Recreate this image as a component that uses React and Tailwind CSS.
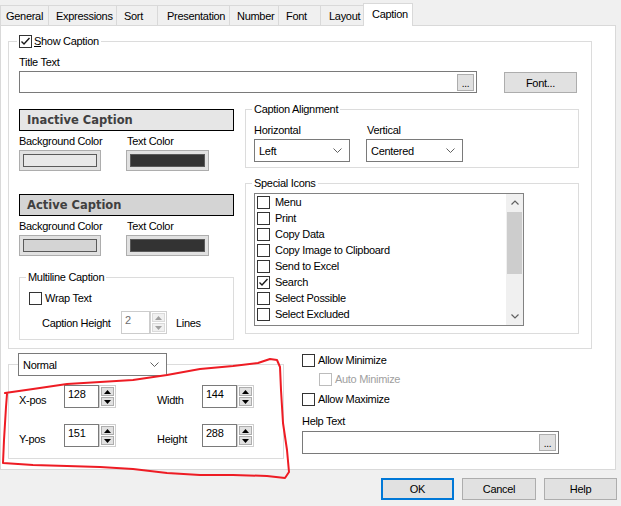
import React from "react";

const tabs = [
  { label: "General", cls: "w-[48px] pl-[5px]" },
  { label: "Expressions", cls: "w-[68px] pl-[7px]" },
  { label: "Sort", cls: "w-[41px] pl-[7px]" },
  { label: "Presentation", cls: "w-[72px] pl-[9px]" },
  { label: "Number", cls: "w-[49px] pl-[7px]" },
  { label: "Font", cls: "w-[42px] pl-[7px]" },
  { label: "Layout", cls: "w-[43px] pl-[8px]" },
];

const iconItems = [
  "Menu",
  "Print",
  "Copy Data",
  "Copy Image to Clipboard",
  "Send to Excel",
  "Search",
  "Select Possible",
  "Select Excluded",
];

const Check = ({ checked = false, disabled = false }) => (
  <span
    className={
      disabled
        ? "flex h-[13px] w-[13px] shrink-0 items-center justify-center border border-[#bcbcbc] bg-white"
        : "flex h-[13px] w-[13px] shrink-0 items-center justify-center border border-[#333333] bg-white"
    }
  >
    {checked && (
      <svg width="11" height="11" viewBox="0 0 11 11">
        <path d="M1.5 5.5 L4 8 L9.5 2" fill="none" stroke="#1a1a1a" strokeWidth="1.4" />
      </svg>
    )}
  </span>
);

const Chevron = () => (
  <svg width="9" height="5" viewBox="0 0 9 5">
    <path d="M0.5 0.5 L4.5 4.5 L8.5 0.5" fill="none" stroke="#606060" strokeWidth="1" />
  </svg>
);

const Dropdown = ({ value, className }) => (
  <div
    className={`flex h-[23px] items-center justify-between border border-[#7a7a7a] bg-white pl-[4px] pr-[7px] ${className}`}
  >
    <span>{value}</span>
    <Chevron />
  </div>
);

const Arrow = ({ down, color = "#000" }) => (
  <svg width="7" height="4" viewBox="0 0 7 4">
    <path d={down ? "M0 0 L3.5 4 L7 0 Z" : "M0 4 L3.5 0 L7 4 Z"} fill={color} />
  </svg>
);

const Spin = ({ value, disabled = false, className = "w-[52px]" }) => (
  <div className={`flex h-[23px] ${className}`}>
    <div
      className={
        disabled
          ? "flex-1 border border-[#cccccc] pl-[3px] pt-[1px] text-[#6d6d6d]"
          : "flex-1 border border-[#7a7a7a] pl-[3px] pt-[1px]"
      }
    >
      {value}
    </div>
    <div className="flex w-[17px] flex-col gap-[1px] border border-[#cfcfcf] bg-white p-[1px]">
      <div
        className={
          disabled
            ? "flex flex-1 items-center justify-center border border-[#dadada] bg-[#f0f0f0]"
            : "flex flex-1 items-center justify-center border border-[#adadad] bg-[#e1e1e1]"
        }
      >
        <Arrow color={disabled ? "#a0a0a0" : "#000"} />
      </div>
      <div
        className={
          disabled
            ? "flex flex-1 items-center justify-center border border-[#dadada] bg-[#f0f0f0]"
            : "flex flex-1 items-center justify-center border border-[#adadad] bg-[#e1e1e1]"
        }
      >
        <Arrow down color={disabled ? "#a0a0a0" : "#000"} />
      </div>
    </div>
  </div>
);

const Dots = () => (
  <div className="flex h-[17px] w-[17px] items-end justify-center border border-[#adadad] bg-[#e1e1e1] text-[10px] leading-[12px]">
    ...
  </div>
);

const Swatch = ({ className, inner }) => (
  <div className={`h-[21px] border border-[#adadad] bg-[#e1e1e1] p-[3px] ${className}`}>
    <div className={`h-full border border-[#5a5a5a] ${inner}`} />
  </div>
);

const CaptionBar = ({ label, className }) => (
  <div
    className={`flex h-[22px] items-center border border-black pl-[7px] font-['DejaVu_Sans',sans-serif] text-[11.5px] font-bold tracking-normal text-[#404040] ${className}`}
  >
    {label}
  </div>
);

const ScrollArrow = ({ down }) => (
  <div className="flex h-[17px] items-center justify-center">
    <svg width="8" height="5" viewBox="0 0 8 5">
      <path
        d={down ? "M0.5 0.5 L4 4 L7.5 0.5" : "M0.5 4.5 L4 1 L7.5 4.5"}
        fill="none"
        stroke="#606060"
        strokeWidth="1.2"
      />
    </svg>
  </div>
);

export default function App() {
  return (
    <div className="relative h-[506px] w-[621px] overflow-hidden whitespace-nowrap bg-[#f0f0f0] font-['Liberation_Sans',sans-serif] text-[11px] leading-[14px] tracking-[-0.3px] text-black">
      {/* tabs */}
      <div className="flex h-[25px] items-end">
        {tabs.map((t) => (
          <div
            key={t.label}
            className={`flex h-[20px] items-center border-l border-t border-[#d9d9d9] ${t.cls}`}
          >
            {t.label}
          </div>
        ))}
        <div className="relative z-10 -mb-px flex h-[23px] w-[50px] items-center border-x border-t border-[#d9d9d9] bg-white pb-[2px] pl-[8px]">
          Caption
        </div>
      </div>

      {/* tab page */}
      <div className="h-[445px] w-[616px] border border-[#d9d9d9] bg-white pl-[7px] pt-[8px]">
        <fieldset className="h-[315px] w-[584px] border border-[#dcdcdc] pl-[8px]">
          <legend className="flex h-[14px] items-center px-[2px]">
            <Check checked />
            <span className="ml-[2px]">
              <span className="underline">S</span>how Caption
            </span>
          </legend>
          <div className="pl-[2px]">
            <div className="mt-[7px]">Title Text</div>
            <div className="mt-[2px] flex items-start">
              <div className="flex h-[22px] w-[458px] items-center justify-end border border-[#7a7a7a] pr-[2px]">
                <Dots />
              </div>
              <div className="ml-[27px] mt-[1px] flex h-[21px] w-[73px] items-center justify-center border border-[#adadad] bg-[#e1e1e1]">
                Font...
              </div>
            </div>

            <div className="mt-[9px] flex">
              {/* left column */}
              <div className="w-[215px] pt-[7px]">
                <CaptionBar label="Inactive Caption" className="bg-[#e6e6e6]" />
                <div className="mt-[3px] flex">
                  <span className="w-[108px]">Background Color</span>
                  <span>Text Color</span>
                </div>
                <div className="mt-[2px] flex">
                  <Swatch className="w-[82px]" inner="bg-[#e8e8e8]" />
                  <Swatch className="ml-[25px] w-[83px]" inner="bg-[#333333]" />
                </div>

                <CaptionBar label="Active Caption" className="mt-[23px] bg-[#d4d4d4]" />
                <div className="mt-[3px] flex">
                  <span className="w-[108px]">Background Color</span>
                  <span>Text Color</span>
                </div>
                <div className="mt-[2px] flex">
                  <Swatch className="w-[82px]" inner="bg-[#d4d4d4]" />
                  <Swatch className="ml-[25px] w-[83px]" inner="bg-[#333333]" />
                </div>

                <fieldset className="mt-[14px] h-[70px] border border-[#dcdcdc] pl-[6px]">
                  <legend className="px-[2px]">Multiline Caption</legend>
                  <div className="ml-[3px] mt-[7px] flex h-[14px] items-center">
                    <Check />
                    <span className="ml-[3px]">Wrap Text</span>
                  </div>
                  <div className="ml-[16px] mt-[6px] flex items-center">
                    <span className="w-[79px]">Caption Height</span>
                    <Spin value="2" disabled className="w-[46px]" />
                    <span className="ml-[9px]">Lines</span>
                  </div>
                </fieldset>
              </div>

              {/* right column */}
              <div className="ml-[11px] w-[334px]">
                <fieldset className="h-[66px] border border-[#dcdcdc] pl-[6px]">
                  <legend className="px-[2px]">Caption Alignment</legend>
                  <div className="mt-[7px] flex pl-[2px]">
                    <span className="w-[113px]">Horizontal</span>
                    <span>Vertical</span>
                  </div>
                  <div className="mt-[2px] flex pl-[2px]">
                    <Dropdown value="Left" className="w-[96px]" />
                    <Dropdown value="Centered" className="ml-[16px] w-[97px]" />
                  </div>
                </fieldset>

                <fieldset className="mt-[8px] h-[158px] border border-[#dcdcdc] pl-[6px]">
                  <legend className="px-[2px]">Special Icons</legend>
                  <div className="ml-[2px] mt-[3px] flex h-[133px] w-[270px] border border-[#828282]">
                    <div className="flex-1 pl-[2px]">
                      {iconItems.map((item) => (
                        <div key={item} className="flex h-[16px] items-center">
                          <Check checked={item === "Search"} />
                          <span className="ml-[5px]">{item}</span>
                        </div>
                      ))}
                    </div>
                    <div className="flex w-[17px] flex-col bg-[#f0f0f0]">
                      <ScrollArrow />
                      <div className="mx-[1px] mt-[1px] h-[62px] bg-[#cdcdcd]" />
                      <div className="flex-1" />
                      <ScrollArrow down />
                    </div>
                  </div>
                </fieldset>
              </div>
            </div>
          </div>
        </fieldset>

        {/* position / size */}
        <div className="mt-[4px] flex">
          <fieldset className="h-[106px] w-[276px] border border-[#dcdcdc] pl-[9px]">
            <legend>
              <Dropdown value="Normal" className="w-[149px]" />
            </legend>
            <div className="mt-[9px] flex items-start">
              <span className="ml-[1px] mt-[8px] w-[45px]">X-pos</span>
              <Spin value="128" />
              <span className="ml-[41px] mt-[8px] w-[45px]">Width</span>
              <Spin value="144" />
            </div>
            <div className="mt-[16px] flex items-start">
              <span className="ml-[1px] mt-[8px] w-[45px]">Y-pos</span>
              <Spin value="151" />
              <span className="ml-[41px] mt-[8px] w-[45px]">Height</span>
              <Spin value="288" />
            </div>
          </fieldset>

          <div className="ml-[18px] flex flex-col">
            <div className="flex h-[14px] items-center">
              <Check />
              <span className="ml-[3px]">Allow Minimize</span>
            </div>
            <div className="ml-[17px] mt-[5px] flex h-[14px] items-center text-[#a0a0a0]">
              <Check disabled />
              <span className="ml-[3px]">Auto Minimize</span>
            </div>
            <div className="mt-[6px] flex h-[14px] items-center">
              <Check />
              <span className="ml-[3px]">Allow Maximize</span>
            </div>
            <div className="mt-[8px]">Help Text</div>
            <div className="mt-[3px] flex h-[23px] w-[257px] items-center justify-end border border-[#7a7a7a] pr-[2px]">
              <Dots />
            </div>
          </div>
        </div>
      </div>

      {/* dialog buttons */}
      <div className="mt-[8px] flex justify-end gap-[8px] pr-[4px]">
        <div className="flex h-[22px] w-[73px] items-center justify-center border-2 border-[#0078d7] bg-[#e1e1e1]">
          OK
        </div>
        <div className="flex h-[22px] w-[74px] items-center justify-center border border-[#adadad] bg-[#e1e1e1]">
          Cancel
        </div>
        <div className="flex h-[22px] w-[73px] items-center justify-center border border-[#adadad] bg-[#e1e1e1]">
          Help
        </div>
      </div>

      {/* red hand-drawn annotation */}
      <svg
        className="pointer-events-none absolute left-0 top-0"
        width="621"
        height="506"
        viewBox="0 0 621 506"
      >
        <path
          d="M5 393 L33 389 L67 384 L100 382 L133 380 L167 375 L200 369 L233 366 L258 363 L270 359 L277 360 L280 367 L281 390 L283 423 L287 450 L289 472 L285 478 L267 476 L233 475 L200 475 L167 473 L133 469 L100 467 L67 466 L33 465 L3 463 L4 440 L6 407 L7 394"
          fill="none"
          stroke="#ee1c24"
          strokeWidth="2"
          strokeLinejoin="round"
          strokeLinecap="round"
        />
      </svg>
    </div>
  );
}
